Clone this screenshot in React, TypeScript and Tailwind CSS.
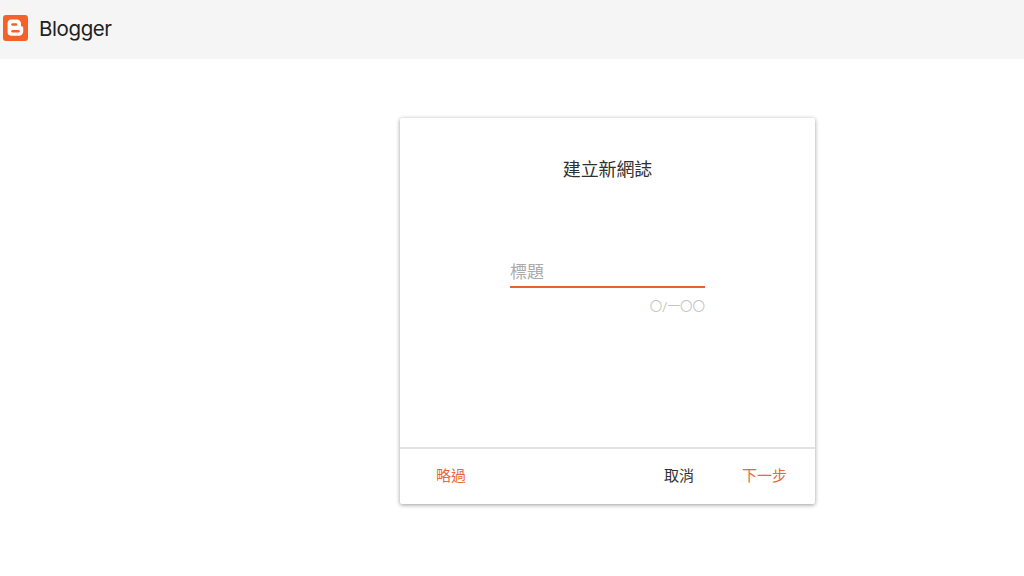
const FONT = "font-['Roboto','Noto_Sans_CJK_TC',sans-serif]";

function BloggerLogo() {
  return (
    <svg width="25" height="26" viewBox="0 0 25 26" className="shrink-0">
      <rect width="25" height="26" rx="3" fill="#f4622a" />
      <path
        d="M8.4 4.500h5.400a4.200 4.200 0 0 1 4.200 4.200v1.800c0 .6.400 1 1 1h.3a.9.9 0 0 1 .9.9v4.200a4.200 4.200 0 0 1-4.200 4.200H8.400a3.800 3.800 0 0 1-3.800-3.800V8.300a3.800 3.800 0 0 1 3.800-3.800z"
        fill="#fff"
      />
      <rect x="8.300" y="8.300" width="6" height="2.500" rx="1.250" fill="#f4622a" />
      <rect x="8.300" y="15" width="8.400" height="2.500" rx="1.250" fill="#f4622a" />
    </svg>
  );
}

export default function App() {
  return (
    <div className={`h-[576px] w-[1024px] overflow-hidden bg-white ${FONT}`}>
      <header className="flex h-[59px] items-center bg-[#f5f5f5] pb-[3px] pl-[3px]">
        <BloggerLogo />
        <span className="ml-[11px] mt-[2px] font-['Inter',sans-serif] text-[20.5px] tracking-[-0.4px] text-[#212121]">Blogger</span>
      </header>

      <main className="pl-[400px] pt-[59px]">
        <div className="flex h-[386px] w-[415px] flex-col rounded-[2px] bg-white shadow-[0_1px_4px_rgba(0,0,0,0.4)]">
          <div className="flex-1">
            <h1 className="pt-[40px] text-center text-[18px] leading-[24px] font-normal tracking-[-0.1px] text-[#303030]">建立新網誌</h1>

            <div className="mx-auto mt-[78px] w-[195px]">
              <div className="border-b-2 border-[#e8602c] pb-[2px] text-[17px] leading-[24px] text-[#ababab]">標題</div>
              <div className="mt-[11px] text-right text-[12.500px] leading-[16px] text-[#c4c4c4]">〇/一〇〇</div>
            </div>
          </div>

          <footer className="flex h-[57px] items-center border-t-2 border-[#e2e2e2] pb-[1px] pl-[36px] pr-[28px] text-[15px]">
            <span className="text-[#e8683a]">略過</span>
            <span className="ml-auto text-[#303030]">取消</span>
            <span className="ml-[48px] text-[#e8683a]">下一步</span>
          </footer>
        </div>
      </main>
    </div>
  );
}
